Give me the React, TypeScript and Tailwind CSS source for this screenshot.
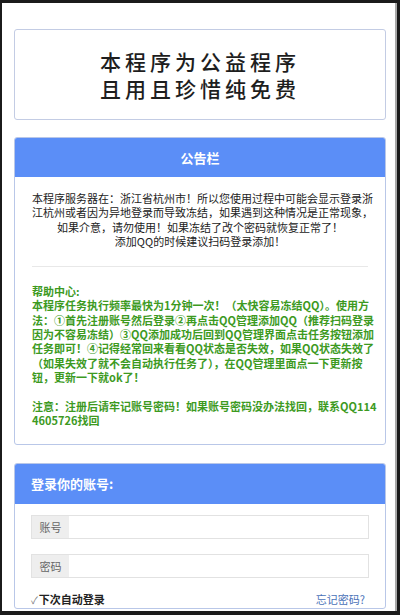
import React from "react";

const noticeLines = [
  "本程序服务器在：浙江省杭州市！所以您使用过程中可能会显示登录浙",
  "江杭州或者因为异地登录而导致冻结，如果遇到这种情况是正常现象，",
  "如果介意，请勿使用！如果冻结了改个密码就恢复正常了！",
  "添加QQ的时候建议扫码登录添加！",
];

const helpLines = [
  "帮助中心:",
  "本程序任务执行频率最快为1分钟一次！（太快容易冻结QQ）。使用方",
  "法：①首先注册账号然后登录②再点击QQ管理添加QQ（推荐扫码登录",
  "因为不容易冻结）③QQ添加成功后回到QQ管理界面点击任务按钮添加",
  "任务即可！④记得经常回来看看QQ状态是否失效，如果QQ状态失效了",
  "（如果失效了就不会自动执行任务了），在QQ管理里面点一下更新按",
  "钮，更新一下就ok了！",
];

const noteLines = [
  "注意：注册后请牢记账号密码！如果账号密码没办法找回，联系QQ114",
  "4605726找回",
];

const font = { fontFamily: '"Noto Sans CJK SC", "Noto Sans", sans-serif' };

export default function App() {
  return (
    <div
      className="w-[400px] h-[615px] overflow-hidden bg-[#1b1b1b] border-t-[3px] border-l-2 border-r-[3px] border-b-[4px] border-[#1b1b1b]"
      style={font}
    >
      <div className="h-full overflow-hidden bg-white border-r-2 border-[#a8a8a8] pl-3 pr-[9px] pt-[26px]">
        {/* Title */}
        <div className="h-[91px] border border-[#c3cce4] rounded-[3px] flex flex-col items-center justify-center text-[21px] leading-[27px] tracking-[4px] font-medium text-[#1e1e1e]">
          <div>本程序为公益程序</div>
          <div>且用且珍惜纯免费</div>
        </div>

        {/* Notice */}
        <div className="mt-[17px] border border-[#b9c7e8] rounded-[3px] overflow-hidden">
          <div className="h-[39px] bg-[#5b8ef7] flex items-center justify-center text-white text-[13px] font-bold">
            公告栏
          </div>
          <div className="px-[17px] pt-[14px] pb-[17px]">
            <div className="text-center text-[11px] leading-[14.3px] text-[#222]">
              {noticeLines.map((l) => (
                <div key={l} className="whitespace-nowrap">{l}</div>
              ))}
            </div>
            <div className="h-px bg-[#e8e8e8] mt-[18px] mb-[17px]" />
            <div className="text-[11px] leading-[14.3px] font-bold text-[#3d9a1f]">
              {helpLines.map((l) => (
                <div key={l} className="whitespace-nowrap">{l}</div>
              ))}
              <div className="h-[14.3px]" />
              {noteLines.map((l) => (
                <div key={l} className="whitespace-nowrap">{l}</div>
              ))}
            </div>
          </div>
        </div>

        {/* Login */}
        <div className="mt-[18px] border border-[#b9c7e8] rounded-[3px] overflow-hidden">
          <div className="h-[40px] bg-[#5b8ef7] flex items-center px-[16px] text-white text-[13px] font-bold">
            登录你的账号:
          </div>
          <div className="px-[16px] pt-[11px]">
            <div className="flex h-[24px] border border-[#e2e2e2]">
              <span className="w-[37px] bg-[#eeeeee] text-[#666] text-[11px] flex items-center justify-center">
                账号
              </span>
              <input className="flex-1 min-w-0 bg-white outline-none px-2 text-[11px]" />
            </div>
            <div className="flex h-[24px] border border-[#e2e2e2] mt-[15px]">
              <span className="w-[37px] bg-[#eeeeee] text-[#666] text-[11px] flex items-center justify-center">
                密码
              </span>
              <input type="password" className="flex-1 min-w-0 bg-white outline-none px-2 text-[11px]" />
            </div>
            <div className="flex items-center justify-between mt-[13px] text-[11px]">
              <span className="font-bold text-[#222] flex items-center">
                <span className="text-[#777] font-normal text-[10px] mr-[1px]">✓</span>下次自动登录
              </span>
              <a className="text-[#4a72b8] mr-[4px]">忘记密码?</a>
            </div>
          </div>
        </div>
      </div>
    </div>
  );
}
